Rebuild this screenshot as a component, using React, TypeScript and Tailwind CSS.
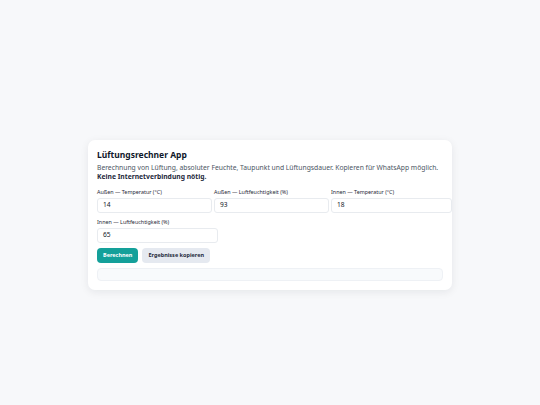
import React from "react";

export default function App() {
  const font = { fontFamily: '"Noto Sans", "DejaVu Sans", sans-serif' };
  return (
    <div className="min-h-screen w-full bg-[#f7f8fa] flex items-center justify-center pt-[24px]" style={font}>
      <div className="w-[364px] bg-white rounded-[7px] shadow-[0_2px_8px_rgba(15,23,42,0.08)] px-[9px] pt-[9px] pb-[9px]">
        <h1 className="text-[8.5px] leading-[11px] font-bold text-[#0f172a]">Lüftungsrechner App</h1>
        <p className="mt-[3px] text-[6.75px] leading-[9.5px] text-[#4b5563]">
          Berechnung von Lüftung, absoluter Feuchte, Taupunkt und Lüftungsdauer. Kopieren für WhatsApp möglich.{" "}
          <br />
          <b className="font-bold text-[#1e293b]">Keine Internetverbindung nötig.</b>
        </p>
        <div className="mt-[6px] grid grid-cols-[113px_113px_113px] gap-x-[4px] gap-y-[5px]">
          <Field label="Außen — Temperatur (°C)" value="14" />
          <Field label="Außen — Luftfeuchtigkeit (%)" value="93" />
          <Field label="Innen — Temperatur (°C)" value="18" wide />
          <Field label="Innen — Luftfeuchtigkeit (%)" value="65" wide />
        </div>
        <div className="mt-[5px] flex gap-[4px]">
          <button className="h-[15px] px-[6px] rounded-[4px] bg-[#14a09a] text-white text-[5.5px] font-bold">Berechnen</button>
          <button className="h-[15px] px-[6px] rounded-[4px] bg-[#e5e9f0] text-[#1e293b] text-[5.5px] font-bold">Ergebnisse kopieren</button>
        </div>
        <div className="mt-[5px] h-[13px] rounded-[4px] bg-[#f8fafc] border border-[#eef1f5]" />
      </div>
    </div>
  );
}

function Field({ label, value, wide }: { label: string; value: string; wide?: boolean }) {
  return (
    <div className="flex flex-col">
      <label className="text-[5.4px] leading-[8px] text-[#1f2937]">{label}</label>
      <div className={`mt-[2px] h-[15px] ${wide ? "w-[121px]" : "w-[115px]"} border border-[#e8ebef] rounded-[3px] bg-white flex items-center px-[5px] text-[6.6px] text-[#111827]`}>
        {value}
      </div>
    </div>
  );
}
